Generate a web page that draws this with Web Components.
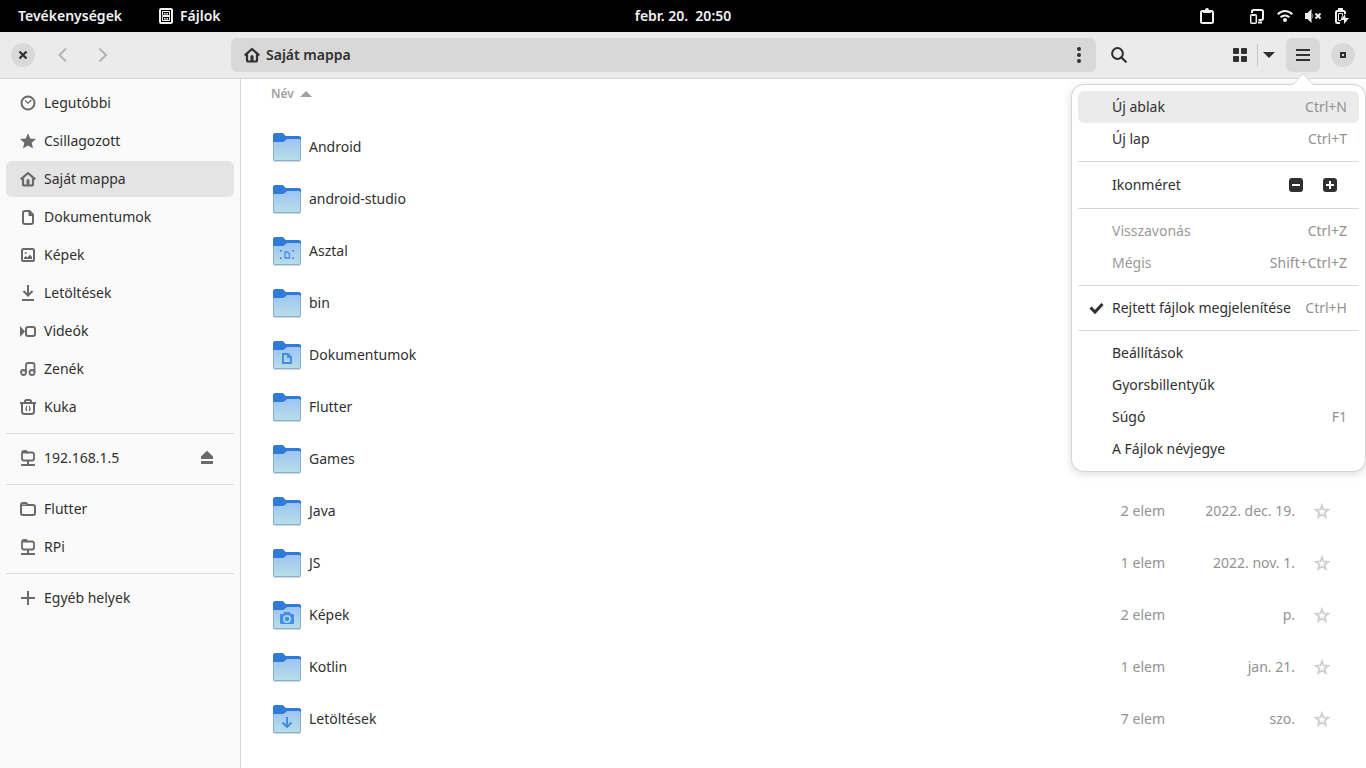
<!DOCTYPE html>
<html lang="hu">
<head>
<meta charset="utf-8">
<meta name="viewport" content="width=device-width, initial-scale=1">
<title>Fájlok</title>
<style>
  body {
    margin: 0;
    font: 14px/20px "Noto Sans", "Open Sans", sans-serif;
    color: #303030;
    --dim: #929292;
    --line: #d9d9d9;
  }
</style>
</head>
<body>
<files-desktop></files-desktop>

<script>
// Symbolic icons, 16x16, painted with currentColor
const line = (width) => `fill="none" stroke="currentColor" stroke-width="${width}"`;
const s = line(2);
const icons = {
  cabinet: `<path fill-rule="evenodd" d="M3 0H13Q15 0 15 2V14Q15 16 13 16H3Q1 16 1 14V2Q1 0 3 0ZM3 2V14H13V2Z"/><path ${line(1)} d="M4.500 3.500h7v4h-7zM4.500 8.500h7v4h-7z"/><path d="M6 5h1v.5h2V5h1v1.500H6zM6 10h1v.5h2V10h1v1.500H6z"/>`,
  clipboard: `<path ${s} d="M4 3H3.500Q2 3 2 4.500V13.500Q2 15 3.500 15H12.500Q14 15 14 13.500V4.500Q14 3 12.500 3H12"/><path d="M4 2H6Q6 0 8 0T10 2H12V5H4Z"/>`,
  devices: `<path ${s} d="M3 5V3.500Q3 2 4.500 2H12.500Q14 2 14 3.500V10Q14 12 12 12H9.500"/><path d="M9 13.500h4v2H9z"/><rect x="1.700" y="6.700" width="5.600" height="8.500" rx="1" ${line(1.5)}/><path d="M3 6h3v2H3z"/>`,
  wifi: `<path ${s} d="M.7 6.300Q4 3 8 3T15.300 6.300M3.600 9.300Q5.500 7.400 8 7.400T12.400 9.300"/><circle cx="8" cy="12" r="2"/>`,
  muted: `<path d="M0 5H2.500L6.500 1V15L2.500 11H0ZM7.500 5Q9 8 7.500 11Z"/><path ${s} d="M10.500 5.500l5 5M15.500 5.500l-5 5"/>`,
  battery: `<path ${s} d="M7 15H4.500Q3 15 3 13.500V4.500Q3 3 4.500 3H10.500Q12 3 12 4.500V6"/><path d="M5 0h5v3H5z"/><path ${line(1)} d="M5.500 5.500h4v2L8 12.500H5.500z"/><path d="M12 6L8 12h3v4l5-6h-3.500z"/>`,
  close: `<path ${line(2.2)} d="M4.500 4.500l7 7M11.500 4.500l-7 7"/>`,
  maximize: `<path ${s} d="M6 6h4v4H6z"/>`,
  back: `<path ${s} d="M11 1.500L4.500 8L11 14.500"/>`,
  forward: `<path ${s} d="M4.500 1.500L11 8L4.500 14.500"/>`,
  home: `<path ${line(2.2)} stroke-linejoin="round" d="M.8 8.300L8 2L15.200 8.300M3 7.500V13Q3 14.500 4.500 14.500H11.500Q13 14.500 13 13V7.500"/><path d="M6.500 9.500Q6.500 8 8 8T9.500 9.500V14H6.500z"/>`,
  kebab: `<circle cx="8" cy="2" r="2"/><circle cx="8" cy="8" r="2"/><circle cx="8" cy="14" r="2"/>`,
  search: `<circle cx="6.500" cy="6.500" r="5.400" ${s}/><path ${line(2.2)} stroke-linecap="round" d="M10.500 10.500L14.800 14.800"/>`,
  grid: `<rect x="1" y="1" width="6" height="6" rx="1"/><rect x="9" y="1" width="6" height="6" rx="1"/><rect x="1" y="9" width="6" height="6" rx="1"/><rect x="9" y="9" width="6" height="6" rx="1"/>`,
  down: `<path d="M2 5H14L8 11Z"/>`,
  up: `<path d="M2 11H14L8 5Z"/>`,
  menu: `<path d="M1 2h14v2H1zM1 7h14v2H1zM1 12h14v2H1z"/>`,
  clock: `<circle cx="8" cy="8" r="6.500" ${s}/><path ${line(1.3)} d="M5 5.500L8 8.200L11.500 5"/>`,
  star: `<path d="M8 .3L10.200 5.400L16 6L11.700 9.700L13 15.500L8 12.500L3 15.500L4.300 9.700L0 6L5.800 5.400Z"/>`,
  outline: `<path ${line(1.8)} d="M8 2.200L9.500 6.300L14.200 6.700L10.600 9.600L11.800 14L8 11.500L4.200 14L5.400 9.600L1.800 6.700L6.500 6.300Z"/>`,
  document: `<path ${s} d="M9 2H5Q3 2 3 4V13Q3 15 5 15H11Q13 15 13 13V6Z"/><path d="M8.500 1h1.500l4 4.500V7H8.500z"/>`,
  image: `<rect x="2" y="2" width="12" height="12" rx="1.500" ${s}/><path d="M4 12V10.500L6 9L7.500 10.500L10 7.500L12 10V12Z"/><circle cx="5.700" cy="6" r="1"/>`,
  download: `<path ${s} d="M8 0V10.500M3.500 6L8 10.500L12.500 6"/><path d="M2 14h12v2H2z"/>`,
  video: `<rect x="6" y="4" width="9" height="9" rx="2" ${s}/><path d="M0 3L5 8.500L0 14Z"/>`,
  music: `<circle cx="3.500" cy="11.500" r="2.500" ${line(1.8)}/><circle cx="12" cy="11.500" r="2.500" ${line(1.8)}/><path ${line(1.8)} d="M6 11.500V4Q6 2 8 2H12.500Q14.500 2 14.500 4V11.500"/>`,
  trash: `<path d="M0 3h16v2H0z"/><path ${s} d="M5 4V2.500Q5 1 6.500 1H9.500Q11 1 11 2.500V4M2 5V12.500Q2 15 4.500 15H11.500Q14 15 14 12.500V5"/><path ${line(1.2)} d="M6.700 7Q5.300 9.500 6.700 12M9.300 7Q10.700 9.500 9.300 12"/>`,
  server: `<path ${line(1.8)} d="M2 8.500V3Q2 1 4 1H6L7.500 2.500H12Q14 2.500 14 4.500V8.500Q14 10.500 12 10.500H4Q2 10.500 2 8.500Z"/><path d="M3 2h4.500l.5 1.500H3zM7 11h2v3h6v2H1v-2h6z"/>`,
  folder: `<path ${s} d="M1 12V4Q1 2 3 2H6L8 4H13Q15 4 15 6V12Q15 14 13 14H3Q1 14 1 12Z"/><path d="M2 3.500h6l-.5 1.500H2z"/>`,
  eject: `<path d="M8 .8L14 6.500V9H2V6.500ZM2 11h12v3H2z"/>`,
  plus: `<path ${s} d="M8 1V15M1 8H15"/>`,
  check: `<path ${line(3)} d="M2.500 7.500L7 12L14.500 4"/>`,
  zoomOut: `<path fill-rule="evenodd" d="M4 1H12Q15 1 15 4V12Q15 15 12 15H4Q1 15 1 12V4Q1 1 4 1ZM4 7V9H12V7Z"/>`,
  zoomIn: `<path fill-rule="evenodd" d="M4 1H12Q15 1 15 4V12Q15 15 12 15H4Q1 15 1 12V4Q1 1 4 1ZM7 4V7H4V9H7V12H9V9H12V7H9V4Z"/>`
};

// Marks stamped on the front of the special folders
const emblems = {
  desktop: `<path d="M9 15h2v1h-1v1H9zM21 15h2v2h-1v-1h-1zM9 22h1v1h1v1H9zM22 22h1v2h-2v-1h1z"/><path fill="none" stroke="#438de6" stroke-width="1.300" d="M14 17h2.500L18.500 19V23H14z"/>`,
  document: `<path fill="none" stroke="#438de6" stroke-width="2" d="M12 15H17L20 18V24H12Z"/><path d="M16 14l5 5h-5z"/>`,
  camera: `<path fill-rule="evenodd" d="M10 15H12.500L13 13H19L19.500 15H22Q23 15 23 16V24Q23 25 22 25H10Q9 25 9 24V16Q9 15 10 15ZM16 16A4 4 0 1 0 16 24A4 4 0 1 0 16 16Z"/><circle cx="16" cy="20" r="2.200"/>`,
  download: `<path fill="none" stroke="#438de6" stroke-width="2" d="M16 14V23.500M11.500 19.500L16 24L20.500 19.500"/>`
};

class UiIcon extends HTMLElement {
  connectedCallback() {
    this.attachShadow({ mode: "open" }).innerHTML = `
      <style>
        :host { display: inline-flex; flex: none; }
        svg { display: block; fill: currentColor; }
      </style>
      <svg width="16" height="16" viewBox="0 0 16 16" aria-hidden="true">${icons[this.getAttribute("name")]}</svg>`;
  }
}
customElements.define("ui-icon", UiIcon);

class FolderIcon extends HTMLElement {
  connectedCallback() {
    const emblem = emblems[this.getAttribute("emblem")] || "";
    this.attachShadow({ mode: "open" }).innerHTML = `
      <style>
        :host { display: inline-flex; flex: none; }
        svg { display: block; }
      </style>
      <svg width="32" height="32" viewBox="0 0 32 32" aria-hidden="true">
        <defs><linearGradient id="front" x2="0" y2="1">
          <stop offset="0" stop-color="#9dc4f2"/><stop offset="1" stop-color="#b8dee8"/>
        </linearGradient></defs>
        <path fill="#000" opacity=".16" d="M2 10H30V29Q30 31 28 31H4Q2 31 2 29Z"/>
        <path fill="#2f7bd8" d="M2 4Q2 2 4 2H11Q12 2 13 3L14 4.500Q14.500 5 16 5H28Q30 5 30 7V27H2Z"/>
        <path fill="#86b0dd" d="M2 11H12Q13 11 14 10L15 9Q16 8 17 8H28Q30 8 30 10V28Q30 30 28 30H4Q2 30 2 28Z"/>
        <path fill="url(#front)" d="M3 11H12Q13 11 14 10L15.500 8.500Q16 8 17 8H28Q29 8 29 9V27Q29 29 28 29H4Q3 29 3 28Z"/>
        <g fill="#438de6">${emblem}</g>
      </svg>`;
  }
}
customElements.define("folder-icon", FolderIcon);

class IconButton extends HTMLElement {
  connectedCallback() {
    this.attachShadow({ mode: "open" }).innerHTML = `
      <style>
        :host { display: block; flex: none; }
        button {
          display: grid;
          place-items: center;
          width: 34px;
          height: 34px;
          padding: 0;
          border: 0;
          border-radius: 6px;
          background: none;
          color: inherit;
        }
        span { display: grid; place-items: center; width: 24px; height: 24px; }
        button:disabled { color: #b4b4b4; }
        :host([narrow]) :is(button, span) { width: 22px; }
        :host([active]) button { background: #d8d8d8; }
        :host([round]) span { border-radius: 50%; background: #d9d9d9; }
      </style>
      <button aria-label="${this.getAttribute("label")}" ${this.hasAttribute("disabled") ? "disabled" : ""}>
        <span><ui-icon name="${this.getAttribute("icon")}"></ui-icon></span>
      </button>`;
  }
}
customElements.define("icon-button", IconButton);

class TopBar extends HTMLElement {
  connectedCallback() {
    this.attachShadow({ mode: "open" }).innerHTML = `
      <style>
        :host {
          display: grid;
          grid-template-columns: 1fr auto 1fr;
          align-items: center;
          height: 32px;
          background: #000;
          color: #f2f2f2;
          font-weight: 600;
        }
        button {
          display: flex;
          align-items: center;
          gap: 6px;
          padding: 0;
          border: 0;
          background: none;
          color: inherit;
          font: inherit;
          white-space: pre;
        }
        .left { display: flex; gap: 36px; padding-left: 18px; }
        .status { display: flex; justify-content: flex-end; gap: 34px; padding-right: 17px; }
        .system { gap: 12px; }
      </style>
      <div class="left">
        <button>Tevékenységek</button>
        <button><ui-icon name="cabinet"></ui-icon>Fájlok</button>
      </div>
      <button>febr. 20.  20:50</button>
      <div class="status">
        <button aria-label="Vágólap"><ui-icon name="clipboard"></ui-icon></button>
        <button class="system" aria-label="Rendszer">
          <ui-icon name="devices"></ui-icon>
          <ui-icon name="wifi"></ui-icon>
          <ui-icon name="muted"></ui-icon>
          <ui-icon name="battery"></ui-icon>
        </button>
      </div>`;
  }
}
customElements.define("top-bar", TopBar);

class HeaderBar extends HTMLElement {
  connectedCallback() {
    this.attachShadow({ mode: "open" }).innerHTML = `
      <style>
        :host {
          display: flex;
          gap: 6px;
          padding: 6px;
          border-bottom: 1px solid #d5d5d5;
          background: #ebebeb;
        }
        .nav { display: flex; gap: 6px; flex: 0 0 219px; }
        .path {
          display: flex;
          flex: 1;
          justify-content: space-between;
          border-radius: 6px;
          background: #d8d8d8;
        }
        .place {
          display: flex;
          align-items: center;
          gap: 6px;
          padding: 0 13px;
          border: 0;
          background: none;
          color: inherit;
          font: inherit;
          font-weight: 600;
        }
        .find { flex: 0 0 115px; }
        .view { display: flex; align-items: center; }
        .view hr { width: 1px; height: 22px; margin: 0; border: 0; background: #c4c4c4; }
      </style>
      <div class="nav">
        <icon-button round icon="close" label="Bezárás"></icon-button>
        <icon-button disabled icon="back" label="Vissza"></icon-button>
        <icon-button disabled icon="forward" label="Előre"></icon-button>
      </div>
      <div class="path">
        <button class="place"><ui-icon name="home"></ui-icon>Saját mappa</button>
        <icon-button icon="kebab" label="Mappa menü"></icon-button>
      </div>
      <div class="find"><icon-button icon="search" label="Keresés"></icon-button></div>
      <div class="view">
        <icon-button icon="grid" label="Rácsnézet"></icon-button>
        <hr>
        <icon-button narrow icon="down" label="Nézet beállításai"></icon-button>
      </div>
      <icon-button active icon="menu" label="Menü"></icon-button>
      <icon-button round icon="maximize" label="Teljes méret"></icon-button>`;
  }
}
customElements.define("header-bar", HeaderBar);

class SideItem extends HTMLElement {
  connectedCallback() {
    this.attachShadow({ mode: "open" }).innerHTML = `
      <style>
        :host {
          display: flex;
          align-items: center;
          height: 36px;
          margin-bottom: 2px;
          padding-right: 10px;
          border-radius: 6px;
        }
        :host([selected]) { background: #e4e4e4; }
        a {
          display: flex;
          flex: 1;
          align-items: center;
          gap: 8px;
          padding: 8px 0 8px 14px;
          color: inherit;
          text-decoration: none;
        }
        ui-icon { color: #6a6a6a; }
      </style>
      <a href="#"><ui-icon name="${this.getAttribute("icon")}"></ui-icon><slot></slot></a>
      <slot name="action"></slot>`;
  }
}
customElements.define("side-item", SideItem);

class PlacesSidebar extends HTMLElement {
  connectedCallback() {
    this.attachShadow({ mode: "open" }).innerHTML = `
      <style>
        :host {
          display: block;
          flex: 0 0 228px;
          padding: 6px;
          border-right: 1px solid #d5d5d5;
          background: #fafafa;
        }
        hr { height: 1px; margin: 8px 0 6px; border: 0; background: var(--line); }
        icon-button { color: #6a6a6a; }
      </style>
      <nav>
        <side-item icon="clock">Legutóbbi</side-item>
        <side-item icon="star">Csillagozott</side-item>
        <side-item icon="home" selected>Saját mappa</side-item>
        <side-item icon="document">Dokumentumok</side-item>
        <side-item icon="image">Képek</side-item>
        <side-item icon="download">Letöltések</side-item>
        <side-item icon="video">Videók</side-item>
        <side-item icon="music">Zenék</side-item>
        <side-item icon="trash">Kuka</side-item>
        <hr>
        <side-item icon="server">192.168.1.5
          <icon-button slot="action" icon="eject" label="Kiadás"></icon-button>
        </side-item>
        <hr>
        <side-item icon="folder">Flutter</side-item>
        <side-item icon="server">RPi</side-item>
        <hr>
        <side-item icon="plus">Egyéb helyek</side-item>
      </nav>`;
  }
}
customElements.define("places-sidebar", PlacesSidebar);

const files = [
  { name: "Android" },
  { name: "android-studio" },
  { name: "Asztal", emblem: "desktop" },
  { name: "bin" },
  { name: "Dokumentumok", emblem: "document" },
  { name: "Flutter" },
  { name: "Games" },
  { name: "Java", size: "2 elem", date: "2022. dec. 19." },
  { name: "JS", size: "1 elem", date: "2022. nov. 1." },
  { name: "Képek", emblem: "camera", size: "2 elem", date: "p." },
  { name: "Kotlin", size: "1 elem", date: "jan. 21." },
  { name: "Letöltések", emblem: "download", size: "7 elem", date: "szo." }
];

class FileList extends HTMLElement {
  connectedCallback() {
    this.attachShadow({ mode: "open" }).innerHTML = `
      <style>
        :host { display: block; flex: 1; overflow: hidden; background: #fff; }
        table { width: 100%; border-collapse: collapse; table-layout: fixed; }
        th {
          height: 42px;
          padding: 5px 0 0 30px;
          box-sizing: border-box;
          text-align: left;
          vertical-align: top;
        }
        th button {
          display: flex;
          align-items: center;
          gap: 4px;
          padding: 0;
          border: 0;
          background: none;
          color: #a0a0a0;
          font: 600 12px/20px "Noto Sans", sans-serif;
        }
        td { height: 52px; padding: 0; color: var(--dim); text-align: right; }
        td:first-child { padding-left: 30px; color: inherit; }
        .name { display: flex; align-items: center; gap: 6px; }
        .size { width: 130px; }
        .date { width: 130px; }
        .fav { width: 71px; }
        td icon-button { margin-left: 10px; color: #cfcfcf; }
      </style>
      <table>
        <colgroup><col><col class="size"><col class="date"><col class="fav"></colgroup>
        <thead><tr><th colspan="4"><button>Név <ui-icon name="up"></ui-icon></button></th></tr></thead>
        <tbody>
          ${files.map((file) => `
            <tr>
              <td><div class="name"><folder-icon emblem="${file.emblem || ""}"></folder-icon>${file.name}</div></td>
              <td>${file.size || ""}</td>
              <td>${file.date || ""}</td>
              <td><icon-button icon="outline" label="Csillagozás"></icon-button></td>
            </tr>`).join("")}
        </tbody>
      </table>`;
  }
}
customElements.define("file-list", FileList);

class MenuItem extends HTMLElement {
  connectedCallback() {
    const inner = `<slot></slot><kbd>${this.getAttribute("keys") || ""}</kbd>`;
    this.attachShadow({ mode: "open" }).innerHTML = `
      <style>
        :host { display: block; }
        button, label {
          display: flex;
          align-items: center;
          box-sizing: border-box;
          width: 100%;
          height: 32px;
          padding: 0 12px 0 34px;
          border: 0;
          border-radius: 6px;
          background: none;
          color: inherit;
          font: inherit;
          white-space: nowrap;
        }
        label { padding-left: 10px; }
        kbd { margin-left: auto; padding-left: 12px; color: var(--dim); font: inherit; }
        button:disabled { color: #9a9a9a; }
        :host([hover]) button { background: #ebebeb; }
        .tick { display: grid; margin-right: 8px; }
        .tick > * { grid-area: 1 / 1; }
        input { width: 16px; height: 16px; margin: 0; appearance: none; }
        input:not(:checked) + ui-icon { visibility: hidden; }
      </style>
      ${this.hasAttribute("checkable")
        ? `<label><span class="tick"><input type="checkbox" checked><ui-icon name="check"></ui-icon></span>${inner}</label>`
        : `<button ${this.hasAttribute("disabled") ? "disabled" : ""}>${inner}</button>`}`;
  }
}
customElements.define("menu-item", MenuItem);

class AppMenu extends HTMLElement {
  connectedCallback() {
    this.attachShadow({ mode: "open" }).innerHTML = `
      <style>
        :host {
          display: block;
          padding: 6px;
          border-radius: 12px;
          background: #fff;
          box-shadow: 0 0 0 1px #d6d6d6, 0 2px 8px 1px rgba(0, 0, 0, .14);
        }
        .tip { position: absolute; top: -12px; right: 50px; }
        hr { height: 1px; margin: 6px 0; border: 0; background: var(--line); }
        .zoom { display: flex; align-items: center; padding: 0 12px 0 34px; }
        .zoom span { flex: 1; }
      </style>
      <svg class="tip" width="24" height="13" viewBox="0 0 24 13" aria-hidden="true">
        <path fill="#fff" d="M0 13V12Q2 12 3 11L12 1L21 11Q22 12 24 12V13Z"/>
        <path fill="none" stroke="#d9d9d9" d="M0 11.500Q2 11.500 3 10.500L12 .7L21 10.500Q22 11.500 24 11.500"/>
      </svg>
      <menu-item hover keys="Ctrl+N">Új ablak</menu-item>
      <menu-item keys="Ctrl+T">Új lap</menu-item>
      <hr>
      <div class="zoom">
        <span>Ikonméret</span>
        <icon-button icon="zoomOut" label="Kisebb ikonok"></icon-button>
        <icon-button icon="zoomIn" label="Nagyobb ikonok"></icon-button>
      </div>
      <hr>
      <menu-item disabled keys="Ctrl+Z">Visszavonás</menu-item>
      <menu-item disabled keys="Shift+Ctrl+Z">Mégis</menu-item>
      <hr>
      <menu-item checkable keys="Ctrl+H">Rejtett fájlok megjelenítése</menu-item>
      <hr>
      <menu-item>Beállítások</menu-item>
      <menu-item>Gyorsbillentyűk</menu-item>
      <menu-item keys="F1">Súgó</menu-item>
      <menu-item>A Fájlok névjegye</menu-item>`;
  }
}
customElements.define("app-menu", AppMenu);

class FilesDesktop extends HTMLElement {
  connectedCallback() {
    this.attachShadow({ mode: "open" }).innerHTML = `
      <style>
        :host { display: flex; flex-direction: column; height: 100vh; overflow: hidden; }
        .window { position: relative; display: flex; flex: 1; flex-direction: column; min-height: 0; }
        main { display: flex; flex: 1; min-height: 0; }
        app-menu { position: absolute; top: 53px; right: 1px; min-width: 281px; }
      </style>
      <top-bar></top-bar>
      <div class="window">
        <header-bar></header-bar>
        <main>
          <places-sidebar></places-sidebar>
          <file-list></file-list>
        </main>
        <app-menu></app-menu>
      </div>`;
  }
}
customElements.define("files-desktop", FilesDesktop);
</script>
</body>
</html>
